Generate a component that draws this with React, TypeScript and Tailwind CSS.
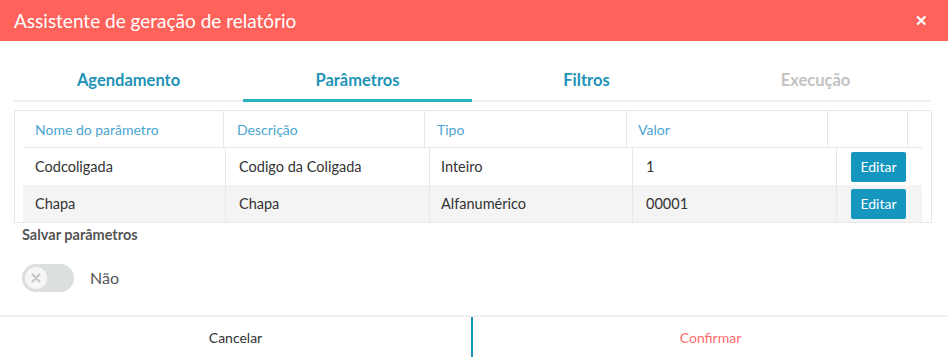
export default function App() {
  const tabs = [
    { label: 'Agendamento', state: 'done' },
    { label: 'Parâmetros', state: 'active' },
    { label: 'Filtros', state: 'done' },
    { label: 'Execução', state: 'disabled' },
  ];

  const rows = [
    { nome: 'Codcoligada', desc: 'Codigo da Coligada', tipo: 'Inteiro', valor: '1', bg: 'bg-white' },
    { nome: 'Chapa', desc: 'Chapa', tipo: 'Alfanumérico', valor: '00001', bg: 'bg-[#f4f4f4]' },
  ];

  return (
    <div className="w-[948px] h-[357px] bg-white flex flex-col font-['Lato','Open_Sans',sans-serif] overflow-hidden">
      <div className="h-[41px] bg-[#ff625a] flex items-center justify-between pl-[14px] pr-[20px] shrink-0">
        <span className="text-white text-[19px] leading-none">Assistente de geração de relatório</span>
        <span className="text-white text-[15px] font-bold leading-none">✕</span>
      </div>

      <div className="mx-[14px] mt-[21px] flex border-b-2 border-[#eeeeee] w-[916px]">
        {tabs.map(t => (
          <div
            key={t.label}
            className={`flex-1 h-[40px] flex items-center justify-center text-[16.5px] font-bold -mb-[2px] border-b-[3px] ${
              t.state === 'active' ? 'border-[#2bb3c1]' : 'border-transparent'
            } ${t.state === 'disabled' ? 'text-[#c2c2c2]' : 'text-[#1e93b7]'}`}
          >
            {t.label}
          </div>
        ))}
      </div>

      <div className="mx-[14px] mt-[8px] w-[918px] border border-[#e8e8e8]">
        <div className="flex h-[36px] text-[14px] text-[#4aa6cf]">
          <div className="w-[209px] border-r border-[#e8e8e8] flex items-center pl-[20px]">Nome do parâmetro</div>
          <div className="w-[201px] border-r border-[#e8e8e8] flex items-center pl-[13px]">Descrição</div>
          <div className="w-[202px] border-r border-[#e8e8e8] flex items-center pl-[12px]">Tipo</div>
          <div className="w-[201px] border-r border-[#e8e8e8] flex items-center pl-[11px]">Valor</div>
          <div className="w-[80px] border-r border-[#e8e8e8]" />
          <div className="flex-1" />
        </div>
        <div className="ml-[8px] w-[899px] border-t border-[#e8e8e8]">
          {rows.map(r => (
            <div key={r.nome} className={`flex h-[37px] text-[14.5px] text-[#333333] ${r.bg}`}>
              <div className="w-[203px] border-r border-[#e8e8e8] flex items-center pl-[12px]">{r.nome}</div>
              <div className="w-[204px] border-r border-[#e8e8e8] flex items-center pl-[13px]">{r.desc}</div>
              <div className="w-[203px] border-r border-[#e8e8e8] flex items-center pl-[11px]">{r.tipo}</div>
              <div className="w-[204px] border-r border-[#e8e8e8] flex items-center pl-[13px]">{r.valor}</div>
              <div className="flex-1 flex items-center pl-[14px]">
                <button className="w-[55px] h-[30px] rounded-[2px] bg-[#1596bf] text-white text-[14px]">Editar</button>
              </div>
            </div>
          ))}
        </div>
      </div>

      <div className="pl-[22px] mt-[3px] text-[14.5px] font-bold text-[#555555] leading-[18px]">Salvar parâmetros</div>

      <div className="pl-[22px] mt-[20px] flex items-center gap-[16px]">
        <div className="w-[52px] h-[28px] rounded-full bg-[#dcdfdf] flex items-center pl-[3px]">
          <div className="w-[22px] h-[22px] rounded-full bg-[#f6f6f6] flex items-center justify-center">
            <svg width="10" height="10" viewBox="0 0 10 10">
              <path d="M1.5 1.5 L8.5 8.5 M8.5 1.5 L1.5 8.5" stroke="#c6c9c9" strokeWidth="2.2" strokeLinecap="round" />
            </svg>
          </div>
        </div>
        <span className="text-[16px] text-[#555555]">Não</span>
      </div>

      <div className="mt-auto h-[42px] border-t-2 border-[#eeeeee] flex text-[14px]">
        <div className="w-[471px] flex items-center justify-center text-[#333333]">Cancelar</div>
        <div className="w-[2px] bg-[#1797bb]" />
        <div className="flex-1 flex items-center justify-center text-[#ff6b6b]">Confirmar</div>
      </div>
    </div>
  );
}
